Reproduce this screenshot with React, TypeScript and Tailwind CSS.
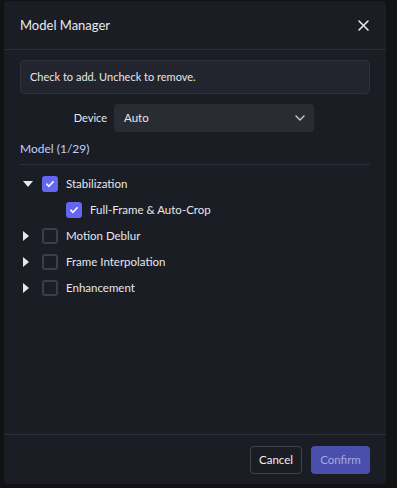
import React from "react";

const Check = () => (
  <svg width="10" height="10" viewBox="0 0 10 10" fill="none">
    <path d="M1.8 5.2 L4 7.3 L8.2 2.8" stroke="white" strokeWidth="1.6" strokeLinecap="round" strokeLinejoin="round" />
  </svg>
);

function Box({ checked }: { checked: boolean }) {
  return checked ? (
    <div className="w-4 h-4 rounded-[3px] bg-[#6366f1] flex items-center justify-center shrink-0">
      <Check />
    </div>
  ) : (
    <div className="w-4 h-4 rounded-[3px] border-2 border-[#3b3e46] shrink-0" />
  );
}

const CaretDown = () => (
  <svg width="10" height="6" viewBox="0 0 10 6"><path d="M0 0 H10 L5 6 Z" fill="#e5e7eb" /></svg>
);
const CaretRight = () => (
  <svg width="6" height="10" viewBox="0 0 6 10"><path d="M0 0 V10 L6 5 Z" fill="#e5e7eb" /></svg>
);

function Row({ label, expanded, checked, indent }: { label: string; expanded?: boolean; checked: boolean; indent?: boolean }) {
  return (
    <div className="h-[26px] flex items-center">
      <div className="w-[22px] flex items-center justify-start pl-[3px] shrink-0">
        {indent ? null : expanded ? <CaretDown /> : <CaretRight />}
      </div>
      {indent ? <div className="w-6 shrink-0" /> : null}
      <Box checked={checked} />
      <span className="ml-2 text-[11.5px] text-[#e5e7eb]">{label}</span>
    </div>
  );
}

export default function App() {
  return (
    <div className="w-[397px] h-[488px] bg-[#111214] pl-1 pt-px" style={{ fontFamily: 'Lato, "Noto Sans", sans-serif' }}>
      <div className="w-[382px] h-[483px] bg-[#1b1d25] rounded-[4px] flex flex-col">
        <div className="h-[49px] flex items-center justify-between px-4 pt-[1px] border-b border-[#2e3039]">
          <span className="text-[13px] text-[#e8e9ec]">Model Manager</span>
          <svg width="11" height="11" viewBox="0 0 11 11" className="mr-[1px]">
            <path d="M1 1 L10 10 M10 1 L1 10" stroke="#e5e7eb" strokeWidth="1.6" strokeLinecap="round" />
          </svg>
        </div>
        <div className="flex-1 px-4 pt-[10px]">
          <div className="h-[34px] rounded-[4px] bg-[#22252d] border border-[#2d3038] flex items-center px-[9px] text-[11px] text-[#e5e7eb]">
            Check to add. Uncheck to remove.
          </div>
          <div className="mt-[10px] flex items-center">
            <span className="w-[87px] text-right text-[11px] text-[#e5e7eb]">Device</span>
            <div className="ml-[7px] w-[200px] h-[28px] rounded-[4px] bg-[#2a2c33] flex items-center justify-between pl-[10px] pr-[9px]">
              <span className="text-[11.5px] text-[#e5e7eb]">Auto</span>
              <svg width="10" height="6" viewBox="0 0 10 6"><path d="M1 1 L5 5 L9 1" stroke="#c7c9ce" strokeWidth="1.4" fill="none" strokeLinecap="round" strokeLinejoin="round" /></svg>
            </div>
          </div>
          <div className="mt-[6px] h-[27px] flex items-center text-[12px] text-[#bcd0ff] border-b border-[#2e3039] pb-[4px]">Model (1/29)</div>
          <div className="mt-[6px]">
            <Row label="Stabilization" expanded checked />
            <Row label="Full-Frame & Auto-Crop" checked indent />
            <Row label="Motion Deblur" checked={false} />
            <Row label="Frame Interpolation" checked={false} />
            <Row label="Enhancement" checked={false} />
          </div>
        </div>
        <div className="h-[50px] border-t border-[#2e3039] flex items-center justify-end gap-[9px] px-4 pt-[1px]">
          <div className="w-[52px] h-[28px] rounded-[4px] border border-[#43454c] flex items-center justify-center text-[11.5px] text-[#f1f2f4]">Cancel</div>
          <div className="w-[59px] h-[28px] rounded-[4px] bg-[#4a4fad] flex items-center justify-center text-[11.5px] text-[#a7aadc]">Confirm</div>
        </div>
      </div>
    </div>
  );
}
